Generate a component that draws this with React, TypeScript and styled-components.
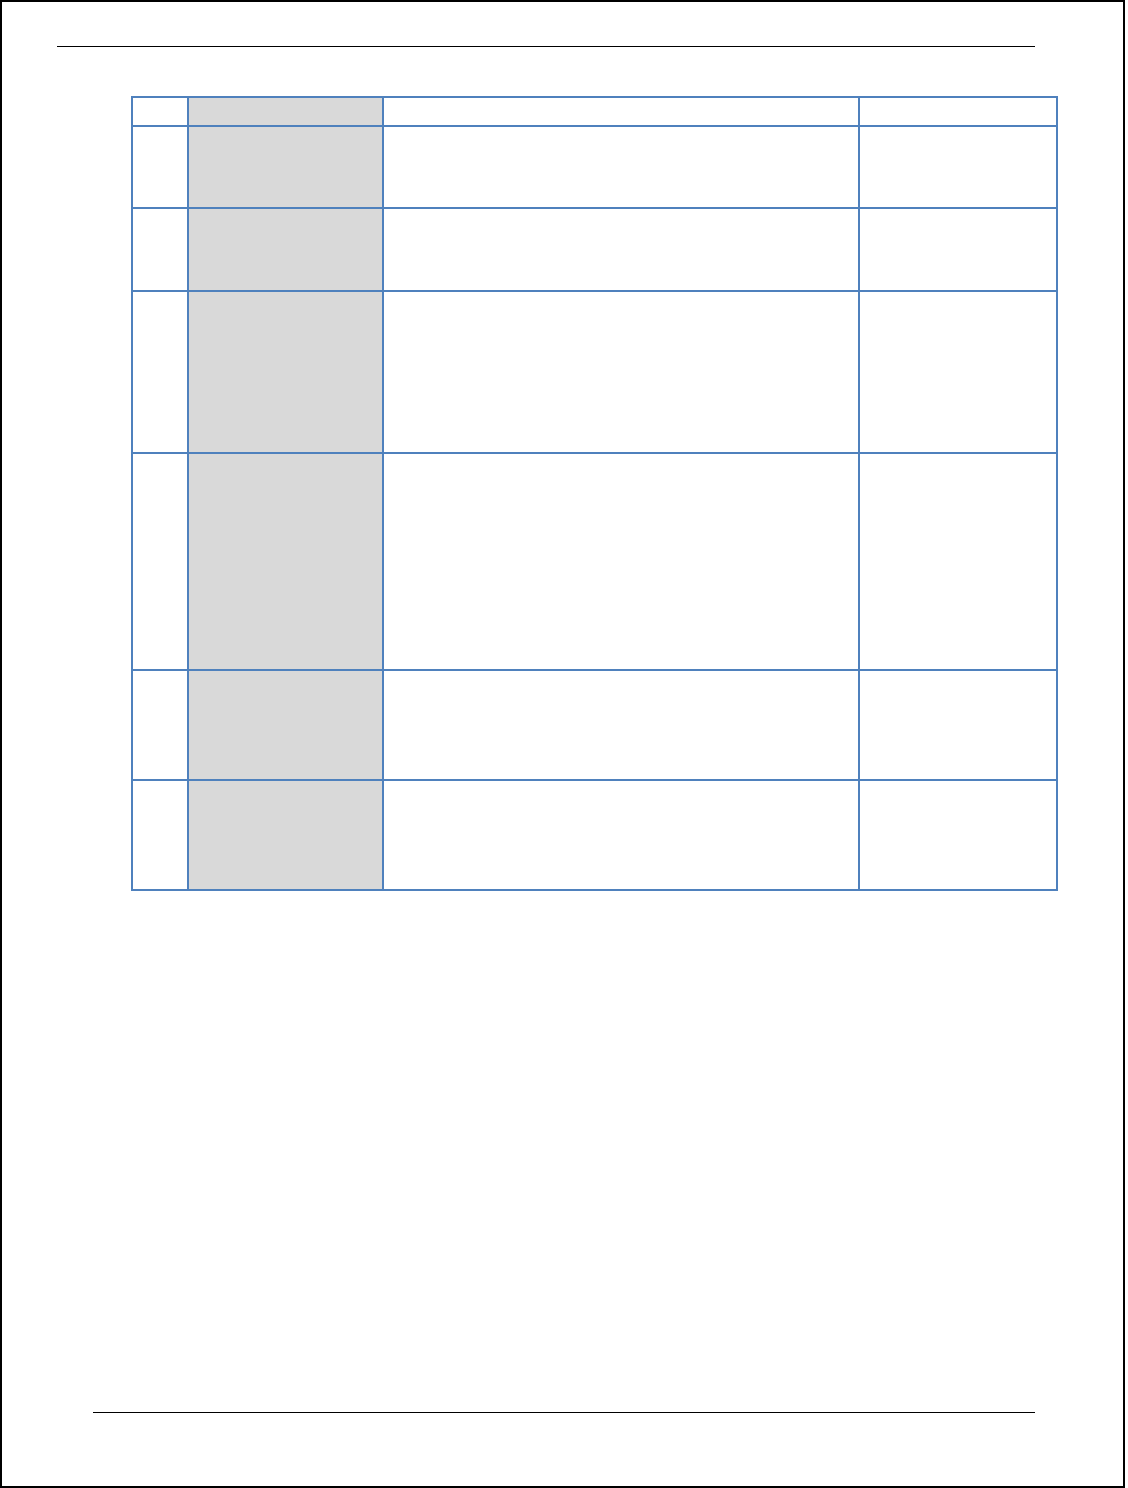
import React from "react";
import styled, { createGlobalStyle } from "styled-components";

const GlobalStyle = createGlobalStyle`
  html, body {
    margin: 0;
    padding: 0;
    background: #ffffff;
    font-family: "Liberation Sans", Arial, sans-serif;
  }
`;

const Page = styled.div`
  box-sizing: border-box;
  width: 1125px;
  height: 1488px;
  border: 2px solid #000000;
  display: flex;
  flex-direction: column;
  align-items: flex-start;
  padding-top: 44px;
  padding-bottom: 73px;
  background: #ffffff;
`;

const Rule = styled.div<{ $left: number; $width: number }>`
  height: 1px;
  background: #000000;
  margin-left: ${(p) => p.$left}px;
  width: ${(p) => p.$width}px;
  flex: none;
`;

const FooterRule = styled(Rule)`
  margin-top: auto;
`;

const Table = styled.div`
  margin-top: 49px;
  margin-left: 129px;
  display: grid;
  grid-template-columns: 54px 193px 474px 196px;
  grid-template-rows: 27px 80px 81px 160px 215px 108px 108px;
  gap: 2px;
  padding: 2px;
  background: #4f81bd;
`;

const Cell = styled.div<{ $shaded?: boolean }>`
  background: ${(p) => (p.$shaded ? "#d9d9d9" : "#ffffff")};
`;

const ROWS = 7;

export default function App() {
  return (
    <>
      <GlobalStyle />
      <Page>
        <Rule $left={55} $width={978} />
        <Table>
          {Array.from({ length: ROWS }).map((_, r) => (
            <React.Fragment key={r}>
              <Cell />
              <Cell $shaded />
              <Cell />
              <Cell />
            </React.Fragment>
          ))}
        </Table>
        <FooterRule $left={91} $width={942} />
      </Page>
    </>
  );
}
